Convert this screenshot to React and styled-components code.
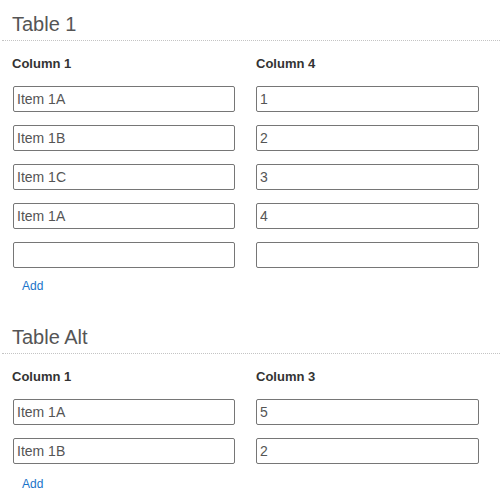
import styled, { createGlobalStyle } from "styled-components";

const GlobalStyle = createGlobalStyle`
  body {
    margin: 0;
    background: #fff;
    font-family: "Liberation Sans", Arial, sans-serif;
  }
`;

const Page = styled.div`
  padding: 12px 1px 0 2px;
`;

const Section = styled.section`
  margin-bottom: 31px;
  &:last-child {
    margin-bottom: 0;
  }
`;

const Heading = styled.h2`
  margin: 0;
  padding: 0 0 4px 10px;
  font-size: 20px;
  line-height: 24px;
  font-weight: normal;
  color: #555;
  border-bottom: 1px dotted #c4c4c4;
`;

const Grid = styled.div`
  display: grid;
  grid-template-columns: 223px 223px;
  column-gap: 21px;
  row-gap: 13px;
  padding: 15px 0 0 10px;
`;

const ColHead = styled.div`
  font-size: 13px;
  line-height: 16px;
  font-weight: bold;
  color: #333;
  margin-bottom: 1px;
`;

const Field = styled.input`
  box-sizing: border-box;
  height: 26px;
  margin-left: ${(p) => (p.$first ? "1px" : "0")};
  width: ${(p) => (p.$first ? "222px" : "223px")};
  padding: 0 3px;
  border: 1px solid #767676;
  border-radius: 2px;
  font-family: "Liberation Sans", Arial, sans-serif;
  font-size: 14px;
  color: #555;
  background: #fff;
`;

const AddLink = styled.a`
  display: inline-block;
  margin: ${(p) => (p.$last ? "12px" : "10px")} 0 0 20px;
  font-size: 12px;
  line-height: 16px;
  color: #1a73c9;
  text-decoration: none;
  cursor: pointer;
`;

const tables = [
  {
    title: "Table 1",
    cols: ["Column 1", "Column 4"],
    rows: [
      ["Item 1A", "1"],
      ["Item 1B", "2"],
      ["Item 1C", "3"],
      ["Item 1A", "4"],
      ["", ""],
    ],
  },
  {
    title: "Table Alt",
    cols: ["Column 1", "Column 3"],
    rows: [
      ["Item 1A", "5"],
      ["Item 1B", "2"],
    ],
  },
];

export default function App() {
  return (
    <>
      <GlobalStyle />
      <Page>
        {tables.map((t, k) => (
          <Section key={t.title}>
            <Heading>{t.title}</Heading>
            <Grid>
              {t.cols.map((c) => (
                <ColHead key={c}>{c}</ColHead>
              ))}
              {t.rows.map((r, i) =>
                r.map((v, j) => (
                  <Field key={i + "-" + j} $first={j === 0} defaultValue={v} />
                ))
              )}
            </Grid>
            <AddLink $last={k === tables.length - 1}>Add</AddLink>
          </Section>
        ))}
      </Page>
    </>
  );
}
